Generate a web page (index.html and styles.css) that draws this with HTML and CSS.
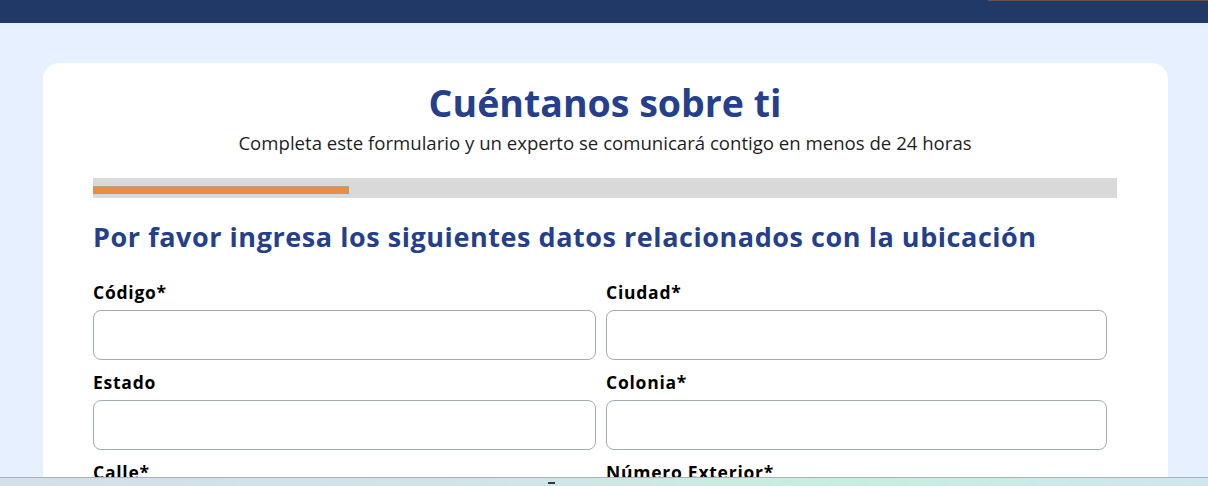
FILE: index.html
```html
<!DOCTYPE html>
<html lang="es">
<head>
    <meta charset="UTF-8" />
    <meta name="viewport" content="width=device-width, initial-scale=1.0" />
    <title>Cuéntanos sobre ti</title>
    <link rel="stylesheet" href="styles.css">
</head>
<body>
    <header class="topbar">
        <span class="topbar-line"></span>
    </header>

    <main class="page">
        <section class="form-card">
            <h1 class="form-title">Cuéntanos sobre ti</h1>
            <p class="form-subtitle">Completa este formulario y un experto se comunicará contigo en menos de 24 horas</p>

            <div class="progress">
                <div class="progress-fill" style="width: 25%;"></div>
            </div>

            <h2 class="step-title">Por favor ingresa los siguientes datos relacionados con la ubicación</h2>

            <form class="form-grid">
                <label class="field">
                    <span class="field-label">Código*</span>
                    <input type="text" class="field-input" />
                </label>
                <label class="field">
                    <span class="field-label">Ciudad*</span>
                    <input type="text" class="field-input" />
                </label>
                <label class="field">
                    <span class="field-label">Estado</span>
                    <input type="text" class="field-input" />
                </label>
                <label class="field">
                    <span class="field-label">Colonia*</span>
                    <input type="text" class="field-input" />
                </label>
                <label class="field">
                    <span class="field-label">Calle*</span>
                    <input type="text" class="field-input" />
                </label>
                <label class="field">
                    <span class="field-label">Número Exterior*</span>
                    <input type="text" class="field-input" />
                </label>
            </form>
        </section>
    </main>

    <div class="bottom-bar">
        <span class="bottom-mark"></span>
    </div>
</body>
</html>
```

FILE: styles.css
```css
html, body {
    margin: 0;
    padding: 0;
    height: 100%;
    overflow: hidden;
}

body {
    background: #e6f0ff;
    font-family: "Open Sans", Arial, sans-serif;
    color: #1a1a1a;
}

.topbar {
    position: relative;
    height: 23px;
    background: #213966;
}

.topbar-line {
    position: absolute;
    top: 0;
    right: 0;
    width: 220px;
    height: 1px;
    background: #6b4e4e;
}

.page {
    padding: 40px 40px 0 43px;
}

.form-card {
    background: #fff;
    border-radius: 16px;
    padding: 16px 51px 40px 50px;
    width: 1024px;
}

.form-title {
    margin: 0;
    text-align: center;
    font-size: 37.5px;
    font-weight: 700;
    line-height: 48px;
    color: #253f8c;
}

.form-subtitle {
    margin: 4px 0 0;
    text-align: center;
    font-size: 18.6px;
    line-height: 24px;
    color: #1f1f1f;
}

.progress {
    margin-top: 23px;
    height: 20px;
    background: #d9d9d9;
    padding-top: 8px;
    box-sizing: border-box;
}

.progress-fill {
    height: 7px;
    background: #ef8a45;
    border-top: 1px solid #b9a494;
}

.step-title {
    margin: 21px 0 0;
    font-size: 27px;
    font-weight: 700;
    line-height: 36px;
    letter-spacing: 0.55px;
    color: #253f8c;
}

.form-grid {
    margin-top: 27px;
    display: grid;
    grid-template-columns: 513px 511px;
    row-gap: 12px;
}

.field {
    display: flex;
    flex-direction: column;
    padding-right: 10px;
}

.field-label {
    font-size: 17.5px;
    font-weight: 700;
    line-height: 20px;
    color: #000;
    margin-bottom: 8px;
    letter-spacing: 0.75px;
}

.field-input {
    height: 50px;
    box-sizing: border-box;
    border: 1px solid #a3acb5;
    border-radius: 8px;
    background: #fff;
    font-size: 16px;
    padding: 0 12px;
}

.bottom-bar {
    position: fixed;
    left: 0;
    right: 0;
    bottom: 0;
    height: 8px;
    background: linear-gradient(90deg, #d3dfea 0%, #cfe5e6 45%, #c6efdf 70%, #cfe6ef 100%);
    border-top: 1px solid #a9b3b8;
}

.bottom-mark {
    position: absolute;
    left: 548px;
    top: 4px;
    width: 7px;
    height: 2px;
    background: #3a3a3a;
}
```
